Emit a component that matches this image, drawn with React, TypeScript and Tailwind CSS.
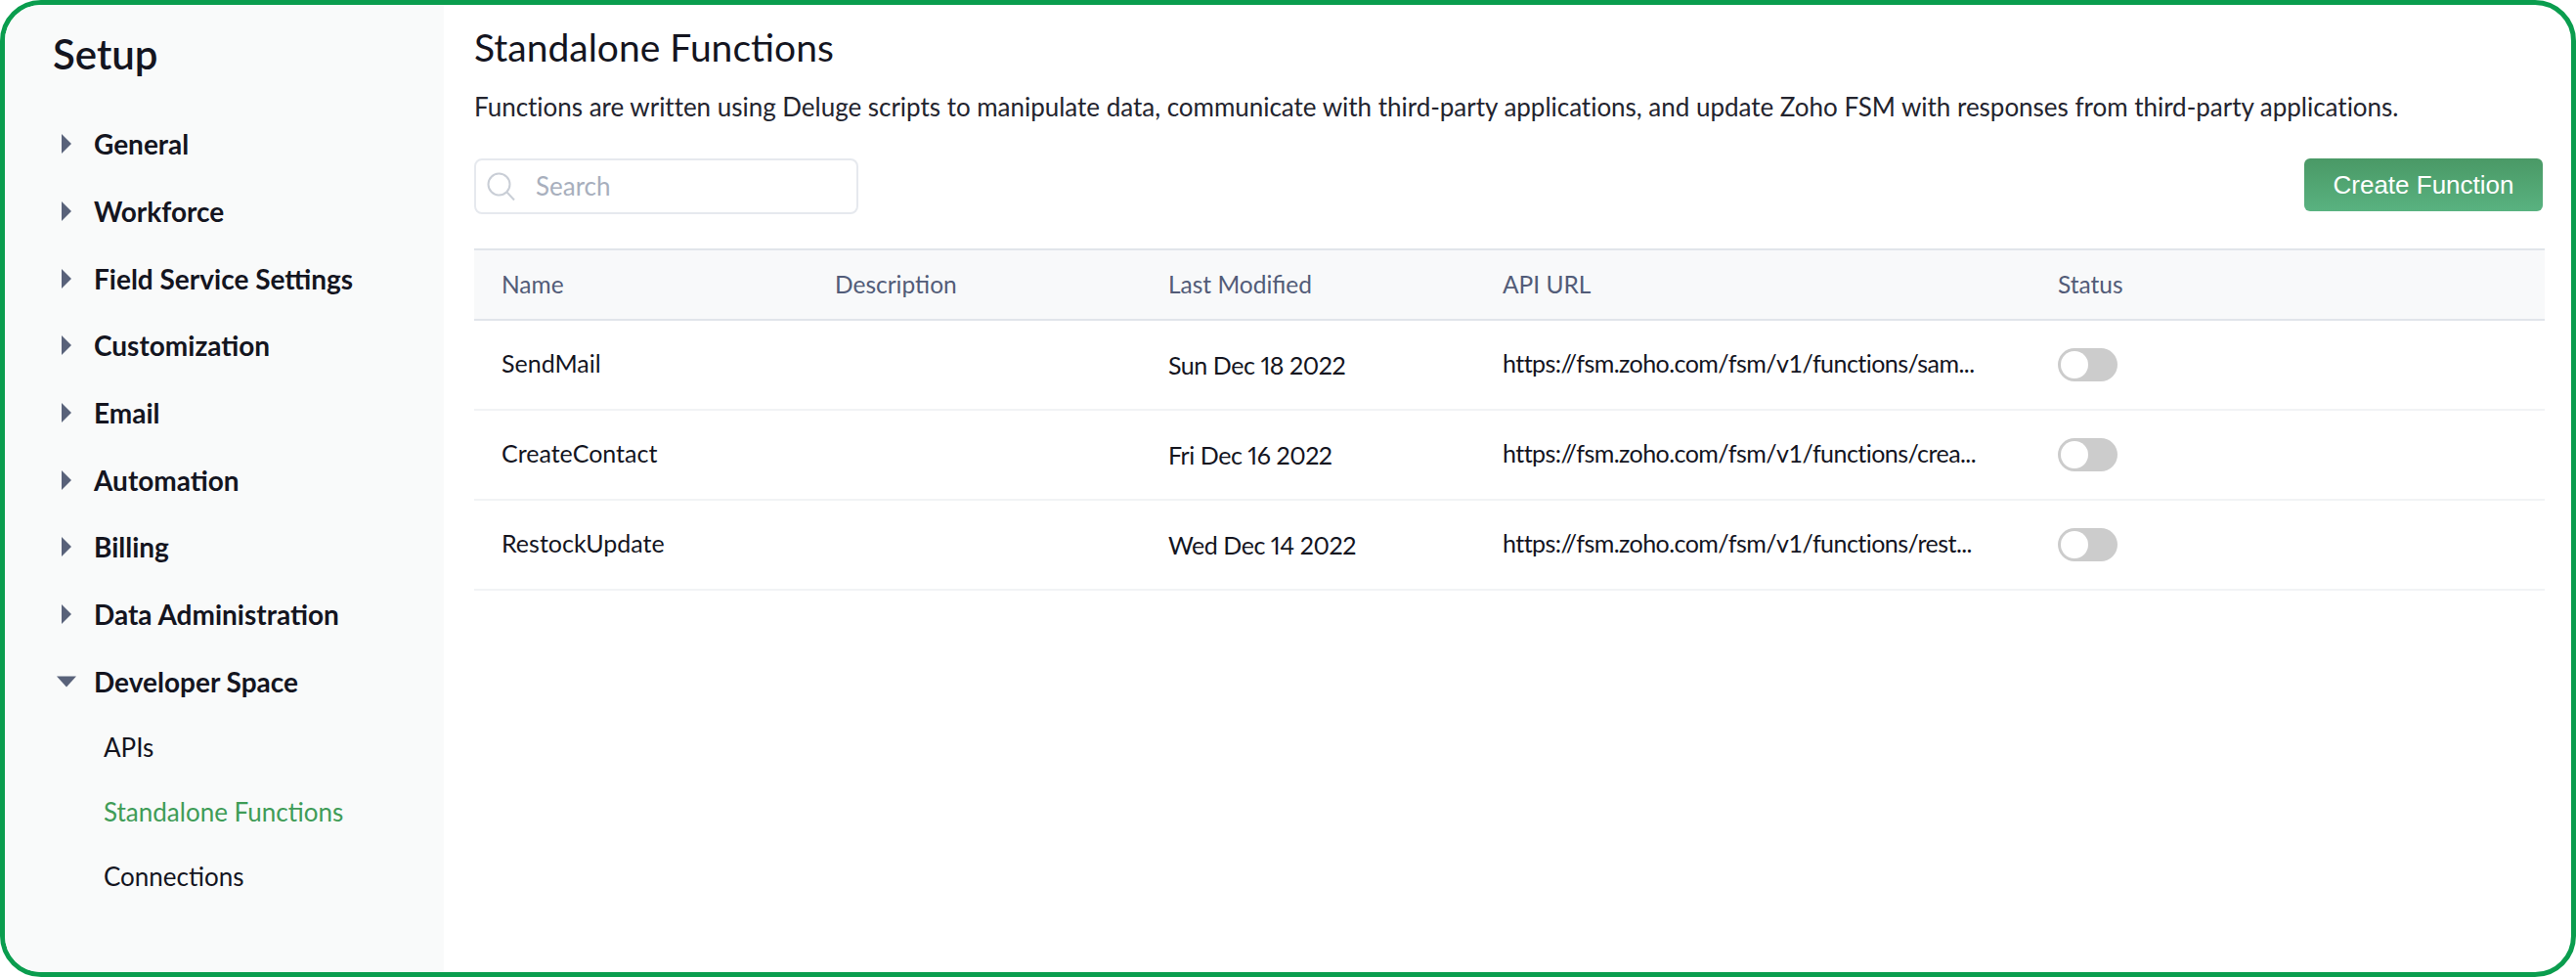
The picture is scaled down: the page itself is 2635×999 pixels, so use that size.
import React from "react";

const font = { fontFamily: "Lato, sans-serif" };

function Caret({ open }: { open?: boolean }) {
  return (
    <svg width="22" height="22" viewBox="0 0 22 22" className="shrink-0">
      {open ? <path d="M1 5.500H21L11 16.500Z" fill="#59627a" /> : <path d="M6 1V21L16 11Z" fill="#59627a" />}
    </svg>
  );
}

const groups = ["General", "Workforce", "Field Service Settings", "Customization", "Email", "Automation", "Billing", "Data Administration"];
const rows = [
  ["SendMail", "Sun Dec 18 2022", "https://fsm.zoho.com/fsm/v1/functions/sam..."],
  ["CreateContact", "Fri Dec 16 2022", "https://fsm.zoho.com/fsm/v1/functions/crea..."],
  ["RestockUpdate", "Wed Dec 14 2022", "https://fsm.zoho.com/fsm/v1/functions/rest..."],
];

export default function App() {
  return (
    <div className="h-[999px] w-[2635px] flex overflow-hidden rounded-[42px] border-[5px] border-[#0a9d4e] bg-white text-[#14151f]" style={font}>
      <aside className="w-[449px] shrink-0 bg-[#f9fafa] pl-[49px] pt-[21px]">
        <h1 className="text-[42px] leading-[58px] font-semibold">Setup</h1>
        <nav className="mt-[29px] ml-[5px] flex flex-col">
          {groups.map((g) => (
            <div key={g} className="flex h-[68.700px] items-center -ml-[1px]">
              <span className="w-[39px] -ml-[1px] flex"><Caret /></span>
              <span className="text-[28px] font-bold">{g}</span>
            </div>
          ))}
          <div className="flex h-[68.700px] items-center -ml-[1px]">
            <span className="w-[39px] -ml-[1px] flex"><Caret open /></span>
            <span className="text-[28px] font-bold">Developer Space</span>
          </div>
          <div className="flex flex-col pl-[47px] text-[26px] font-normal">
            <span className="h-[66px] leading-[66px]">APIs</span>
            <span className="h-[66px] leading-[66px] text-[#3f9c57]">Standalone Functions</span>
            <span className="h-[66px] leading-[66px]">Connections</span>
          </div>
        </nav>
      </aside>
      <main className="flex-1 pl-[31px] pr-[27px] pt-[18px]">
        <h2 className="text-[39px] leading-[50px] font-normal">Standalone Functions</h2>
        <p className="mt-[18px] text-[26px] leading-[36px] tracking-[-0.02px] text-[#23242e]">
          Functions are written using Deluge scripts to manipulate data, communicate with third-party applications, and update Zoho FSM with responses from third-party applications.
        </p>
        <div className="mt-[35px] flex items-start justify-between pr-[2px]">
          <div className="flex h-[57px] w-[393px] items-center rounded-[8px] border-2 border-[#e6e9ee] pl-[11px]">
            <svg width="30" height="30" viewBox="0 0 30 30" fill="none" stroke="#c9ced6" strokeWidth="2" className="shrink-0">
              <circle cx="12.500" cy="12.500" r="11" />
              <path d="M20.500 20.500L28 28.500" />
            </svg>
            <span className="ml-[20px] text-[26px] text-[#a8afbd]">Search</span>
          </div>
          <button className="h-[54px] w-[244px] rounded-[6px] bg-gradient-to-b from-[#4a9966] to-[#59b280] text-[26px] text-white font-['Liberation_Sans',sans-serif]">
            Create Function
          </button>
        </div>
        <section className="mt-[35px]">
          <div className="grid h-[74px] grid-cols-[341px_341px_342px_568px_1fr] items-center border-y-2 border-[#e1e5ea] bg-[#f8f9fa] text-[24.500px] text-[#525c78]">
            {["Name", "Description", "Last Modified", "API URL", "Status"].map((h) => (
              <span key={h} className="pl-[28px]">{h}</span>
            ))}
          </div>
          {rows.map((r) => (
            <div key={r[0]} className="grid h-[92px] grid-cols-[341px_341px_342px_568px_1fr] items-center border-b-2 border-[#f1f3f5] text-[25px] text-[#14151f]">
              <span className="pl-[28px] pb-[2px]">{r[0]}</span>
              <span />
              <span className="pl-[28px] pt-[2px] tracking-[-0.45px] proportional-nums">{r[1]}</span>
              <span className="pl-[28px] pb-[2px] tracking-[-0.55px]">{r[2]}</span>
              <span className="pl-[28px]">
                <span className="flex h-[34px] w-[61px] items-center rounded-full bg-[#cccccc] pl-[3px]">
                  <span className="h-[28px] w-[28px] rounded-full bg-white" />
                </span>
              </span>
            </div>
          ))}
        </section>
      </main>
    </div>
  );
}
